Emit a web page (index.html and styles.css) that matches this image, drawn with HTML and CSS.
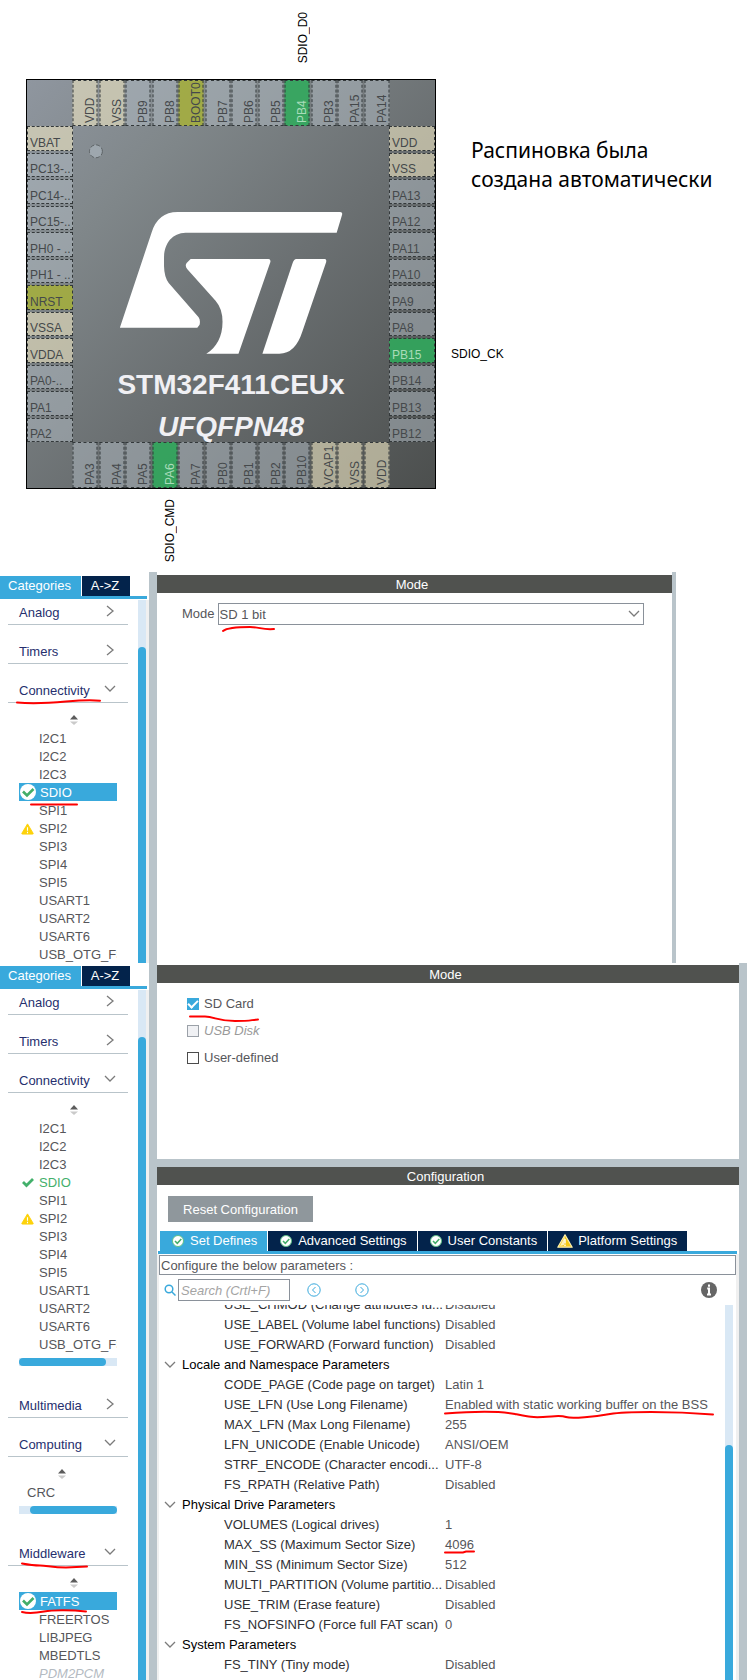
FILE: index.html
```html
<!DOCTYPE html>
<html lang="ru">
<head>
<meta charset="utf-8">
<title>STM32F411CEUx</title>
<link rel="stylesheet" href="styles.css">
</head>
<body>
<svg class="defs" width="0" height="0" aria-hidden="true">
  <symbol id="right" viewBox="0 0 12 12"><path d="M3 1l6 5-6 5" fill="none" stroke="#7b7b7b" stroke-width="1.3"/></symbol>
  <symbol id="down" viewBox="0 0 12 12"><path d="M1 3l5 5 5-5" fill="none" stroke="#7b7b7b" stroke-width="1.3"/></symbol>
  <symbol id="sort" viewBox="0 0 8 10"><path d="M0 4.5L4 0l4 4.500z" fill="#5c5c5c"/><path d="M0 6.500L4 10l4-3.500z" fill="#cacaca"/></symbol>
  <symbol id="tick" viewBox="0 0 16 16"><path d="M3 8l3.500 3.500L13 5" fill="none" stroke="#43b06b" stroke-width="2.800"/></symbol>
  <symbol id="ticked" viewBox="0 0 16 16"><circle cx="8" cy="8" r="8" fill="#fff"/><path d="M3 7.500l4 4 6.500-6.500" fill="none" stroke="#43ad69" stroke-width="2.600"/></symbol>
  <symbol id="tabok" viewBox="0 0 12 12"><circle cx="6" cy="6" r="5.500" fill="#fff" stroke="#5fc088"/><path d="M3 6l2.300 2.300L9.300 4" fill="none" stroke="#43ad69" stroke-width="1.500"/></symbol>
  <symbol id="warn" viewBox="0 0 14 12"><path d="M7 .5L1 10.500Q.5 11.500 1.500 11.500h11q1 0 .5-1z" fill="#fdd20a" stroke="#fdd20a"/><path d="M7 4v4M7 9v1.500" stroke="#fff" stroke-width="1.200"/></symbol>
  <symbol id="warntab" viewBox="0 0 16 14"><path d="M8 .7L.8 13.200h14.400z" fill="#f6c915" stroke="#fbeeb0" stroke-width="1.200" stroke-linejoin="round"/><path d="M8 2L3 12l4-1z" fill="#fdf0b4"/><path d="M8 5v4.500M8 10.500v1.500" stroke="#fff" stroke-width="1.400"/></symbol>
</svg>
<div class="page">

  <section class="pinout">
    <div class="toplabels"><span class="up net c9">SDIO_D0</span></div>
    <div class="chip">
      <div class="pins top">
        <span class="pin pw">VDD</span><span class="pin pw">VSS</span><span class="pin">PB9</span><span class="pin">PB8</span><span class="pin sys">BOOT0</span><span class="pin">PB7</span><span class="pin">PB6</span><span class="pin">PB5</span><span class="pin on">PB4</span><span class="pin">PB3</span><span class="pin">PA15</span><span class="pin">PA14</span>
      </div>
      <div class="pins left">
        <span class="pin pw">VBAT</span><span class="pin">PC13-..</span><span class="pin">PC14-..</span><span class="pin">PC15-..</span><span class="pin">PH0 - ..</span><span class="pin">PH1 - ..</span><span class="pin sys">NRST</span><span class="pin pw">VSSA</span><span class="pin pw">VDDA</span><span class="pin">PA0-..</span><span class="pin">PA1</span><span class="pin">PA2</span>
      </div>
      <div class="die">
        <svg class="logo" viewBox="72 126 317 240" aria-hidden="true">
          <circle cx="95" cy="151" r="6.500" fill="#9ea7ae" stroke="#5c6265" stroke-dasharray="4 2"/>
          <g fill="#fff">
            <path d="M119 328L150.700 233Q157 212 177 212H340Q342.500 212 342 214.500L336.500 232.700H185C171 233 163.300 244 163.300 258V266Q163.500 277 168 283L198 317.500Q200 320 199 325L196.700 328Z"/>
            <path d="M190 259H268Q270.500 259 270 262L238 354H205.700C216 348 222 337 222 322Q222 309 215 301L186.500 269Q184 266 186 263Z"/>
            <path d="M296 259H324.500Q326.500 259 326 262L302 332Q295 354 279 354H262L292 264Q293.500 259 296 259Z"/>
          </g>
        </svg>
        <strong class="part">STM32F411CEUx</strong>
        <strong class="package">UFQFPN48</strong>
      </div>
      <div class="pins right">
        <span class="pin pw">VDD</span><span class="pin pw">VSS</span><span class="pin">PA13</span><span class="pin">PA12</span><span class="pin">PA11</span><span class="pin">PA10</span><span class="pin">PA9</span><span class="pin">PA8</span><span class="pin on">PB15</span><span class="pin">PB14</span><span class="pin">PB13</span><span class="pin">PB12</span>
      </div>
      <div class="pins bottom">
        <span class="pin">PA3</span><span class="pin">PA4</span><span class="pin">PA5</span><span class="pin on">PA6</span><span class="pin">PA7</span><span class="pin">PB0</span><span class="pin">PB1</span><span class="pin">PB2</span><span class="pin">PB10</span><span class="pin pw">VCAP1</span><span class="pin pw">VSS</span><span class="pin pw">VDD</span>
      </div>
    </div>
    <div class="sidelabels">
      <p class="note">Распиновка была<br>создана автоматически</p>
      <span class="net ck">SDIO_CK</span>
    </div>
    <div class="bottomlabels"><span class="up net c4">SDIO_CMD</span></div>
  </section>

  <section class="panel first">
    <aside class="side">
      <div class="tabs"><button class="tab active">Categories</button><button class="tab">A-&gt;Z</button></div>
      <div class="scroller">
        <div class="cats">
          <button class="cat">Analog<svg><use href="#right"/></svg></button>
          <button class="cat">Timers<svg><use href="#right"/></svg></button>
          <button class="cat">Connectivity<svg><use href="#down"/></svg></button>
          <div class="sort"><svg><use href="#sort"/></svg></div>
          <ul class="list">
            <li>I2C1</li><li>I2C2</li><li>I2C3</li>
            <li class="sel"><svg><use href="#ticked"/></svg>SDIO</li>
            <li>SPI1</li><li><svg class="w"><use href="#warn"/></svg>SPI2</li><li>SPI3</li><li>SPI4</li><li>SPI5</li>
            <li>USART1</li><li>USART2</li><li>USART6</li><li>USB_OTG_FS</li>
          </ul>
        </div>
        <div class="vbar"><div class="vthumb"></div></div>
      </div>
    </aside>
    <main class="main">
      <h2 class="bar">Mode</h2>
      <div class="moderow">
        <label for="mode">Mode</label>
        <div class="combo"><select id="mode"><option>SD 1 bit</option></select><svg><use href="#down"/></svg></div>
      </div>
    </main>
    <svg class="marks" aria-hidden="true">
      <path d="M17 130.500C35 132 55 130.500 66 129.500S90 127.500 100 128.700"/>
      <path d="M223 59C228 55 240 55 250 55S262 58 274 57"/>
      <path d="M31 232.500H77"/>
    </svg>
  </section>

  <section class="panel second">
    <aside class="side">
      <div class="tabs"><button class="tab active">Categories</button><button class="tab">A-&gt;Z</button></div>
      <div class="scroller">
        <div class="cats">
          <button class="cat">Analog<svg><use href="#right"/></svg></button>
          <button class="cat">Timers<svg><use href="#right"/></svg></button>
          <button class="cat">Connectivity<svg><use href="#down"/></svg></button>
          <div class="sort"><svg><use href="#sort"/></svg></div>
          <ul class="list">
            <li>I2C1</li><li>I2C2</li><li>I2C3</li>
            <li class="ok"><svg><use href="#tick"/></svg>SDIO</li>
            <li>SPI1</li><li><svg class="w"><use href="#warn"/></svg>SPI2</li><li>SPI3</li><li>SPI4</li><li>SPI5</li>
            <li>USART1</li><li>USART2</li><li>USART6</li><li>USB_OTG_FS</li>
          </ul>
          <div class="hbar"><div class="hthumb"></div></div>
          <button class="cat">Multimedia<svg><use href="#right"/></svg></button>
          <button class="cat">Computing<svg><use href="#down"/></svg></button>
          <div class="sort near"><svg><use href="#sort"/></svg></div>
          <ul class="list near"><li>CRC</li></ul>
          <div class="hbar end"><div class="hthumb"></div></div>
          <button class="cat">Middleware<svg><use href="#down"/></svg></button>
          <div class="sort"><svg><use href="#sort"/></svg></div>
          <ul class="list">
            <li class="sel"><svg><use href="#ticked"/></svg>FATFS</li>
            <li>FREERTOS</li><li>LIBJPEG</li><li>MBEDTLS</li><li class="off">PDM2PCM</li>
          </ul>
        </div>
        <div class="vbar"><div class="vthumb"></div></div>
      </div>
    </aside>
    <main class="main">
      <h2 class="bar">Mode</h2>
      <div class="checks">
        <label><input type="checkbox" checked>SD Card</label>
        <label class="off"><input type="checkbox" disabled>USB Disk</label>
        <label><input type="checkbox">User-defined</label>
      </div>
      <h2 class="bar">Configuration</h2>
      <div class="config">
        <button class="reset">Reset Configuration</button>
        <div class="tabs ctabs">
          <button class="tab active"><svg><use href="#tabok"/></svg>Set Defines</button>
          <button class="tab"><svg><use href="#tabok"/></svg>Advanced Settings</button>
          <button class="tab"><svg><use href="#tabok"/></svg>User Constants</button>
          <button class="tab plat"><svg><use href="#warntab"/></svg>Platform Settings</button>
        </div>
        <div class="params">
          <p class="desc">Configure the below parameters :</p>
          <div class="tools">
            <label for="search" aria-label="Search"><svg class="lens" viewBox="0 0 12 12"><circle cx="5" cy="5" r="3.800"/><path d="M8 8l3.500 3.500"/></svg></label>
            <input id="search" type="text" placeholder="Search (Crtl+F)">
            <button class="nav" aria-label="Previous"><svg viewBox="0 0 14 14"><circle cx="7" cy="7" r="6.200"/><path d="M8.500 4L5.500 7l3 3"/></svg></button>
            <button class="nav" aria-label="Next"><svg viewBox="0 0 14 14"><circle cx="7" cy="7" r="6.200"/><path d="M5.500 4l3 3-3 3"/></svg></button>
            <button class="info" aria-label="Info"><svg viewBox="0 0 16 16"><circle cx="8" cy="8" r="8"/><path d="M8 2.500v2.300M6.200 6.500H8v6M6 12.500h4"/></svg></button>
          </div>
          <div class="scroller">
            <table class="grid">
              <tr><td>USE_CHMOD (Change attributes fu...</td><td>Disabled</td></tr>
              <tr><td>USE_LABEL (Volume label functions)</td><td>Disabled</td></tr>
              <tr><td>USE_FORWARD (Forward function)</td><td>Disabled</td></tr>
              <tr><th colspan="2"><svg><use href="#down"/></svg>Locale and Namespace Parameters</th></tr>
              <tr><td>CODE_PAGE (Code page on target)</td><td>Latin 1</td></tr>
              <tr><td>USE_LFN (Use Long Filename)</td><td>Enabled with static working buffer on the BSS</td></tr>
              <tr><td>MAX_LFN (Max Long Filename)</td><td>255</td></tr>
              <tr><td>LFN_UNICODE (Enable Unicode)</td><td>ANSI/OEM</td></tr>
              <tr><td>STRF_ENCODE (Character encodi...</td><td>UTF-8</td></tr>
              <tr><td>FS_RPATH (Relative Path)</td><td>Disabled</td></tr>
              <tr><th colspan="2"><svg><use href="#down"/></svg>Physical Drive Parameters</th></tr>
              <tr><td>VOLUMES (Logical drives)</td><td>1</td></tr>
              <tr><td>MAX_SS (Maximum Sector Size)</td><td>4096</td></tr>
              <tr><td>MIN_SS (Minimum Sector Size)</td><td>512</td></tr>
              <tr><td>MULTI_PARTITION (Volume partitio...</td><td>Disabled</td></tr>
              <tr><td>USE_TRIM (Erase feature)</td><td>Disabled</td></tr>
              <tr><td>FS_NOFSINFO (Force full FAT scan)</td><td>0</td></tr>
              <tr><th colspan="2"><svg><use href="#down"/></svg>System Parameters</th></tr>
              <tr><td>FS_TINY (Tiny mode)</td><td>Disabled</td></tr>
              <tr><td>FS_EXFAT (Support for exFAT fi...</td><td>Disabled</td></tr>
            </table>
            <div class="vbar"><div class="vthumb"></div></div>
          </div>
        </div>
      </div>
    </main>
    <svg class="marks" aria-hidden="true">
      <path d="M190 53.500H205C215 54 218 58 235 58S250 57 258 56.500"/>
      <path d="M22 600.500C30 602 33 602.500 40 602.500S52 604.500 66 604.500L87 603.500"/>
      <path d="M22 649C30 651 36 650 44 648.500S70 646.500 86 648.500"/>
      <path d="M445 450.500C470 448.500 500 448 515 451S532 454.500 543 454S560 452 566 454S595 453.500 610 451S670 448 713 451.500"/>
      <path d="M445 589.500H463L466 588.500H474"/>
    </svg>
  </section>
</div>
</body>
</html>
```
FILE: styles.css
```css
* { box-sizing: border-box; }
body { margin: 0; background: #fff; color: #56565a; font: 13px/18px "Liberation Sans", Arial, sans-serif; }
button { border: 0; padding: 0; margin: 0; background: none; font: inherit; color: inherit; }
ul, p, h2 { margin: 0; padding: 0; list-style: none; font-weight: normal; }
svg { display: block; flex: none; }
.defs { position: absolute; }
.page { display: flex; flex-direction: column; height: 100vh; overflow: hidden; }

/* Chip pinout */
.pinout { display: grid; grid-template-columns: 410px 1fr; grid-template-rows: 79px 410px 83px; padding-left: 26px; font-size: 12px; line-height: 14px; }
.toplabels, .bottomlabels { display: grid; grid-template-columns: repeat(12, 1fr); column-gap: 2px; padding: 0 47px; }
.toplabels { grid-column: 1; align-items: end; padding-bottom: 16px; }
.bottomlabels { grid-column: 1; grid-row: 3; align-items: start; padding-top: 10px; }
.up { writing-mode: vertical-rl; transform: rotate(180deg); justify-self: end; margin-left: 2px; }
.net { color: #000; }
.c9 { grid-column: 9; }
.c4 { grid-column: 4; }
.chip { grid-column: 1; grid-row: 2; display: grid; grid-template-columns: 46px minmax(0, 1fr) 46px; grid-template-rows: 46px minmax(0, 1fr) 46px; border: 1px solid #000; background: linear-gradient(135deg, #8f969f, #80878a 25%, #6b7072 55%, #4c4f4e); }
.pins { display: grid; gap: 2px; }
.top, .bottom { grid-column: 2; grid-template-columns: repeat(12, minmax(0, 1fr)); }
.left, .right { grid-row: 2; grid-template-rows: repeat(12, minmax(0, 1fr)); }
.top { grid-row: 1; }
.bottom { grid-row: 3; }
.left { grid-column: 1; }
.right { grid-column: 3; }
.pin { display: flex; align-items: flex-end; padding-left: 2px; border: 1px dashed #33383a; background: rgba(179, 189, 198, .5); color: #45494b; white-space: nowrap; }
.top .pin, .bottom .pin { writing-mode: vertical-rl; transform: rotate(180deg); padding: 2px 0 0; }
.pin.pw { background: rgba(238, 230, 195, .6); }
.pin.sys { background: rgba(169, 179, 54, .8); }
.pin.on { background: rgba(46, 172, 92, .85); color: #a9dcb9; }
.die { grid-column: 2; grid-row: 2; display: flex; flex-direction: column; align-items: center; color: #f0f0f4; font-size: 28px; line-height: 30px; }
.logo { width: 100%; height: 240px; margin-bottom: 4px; }
.part, .package { white-space: nowrap; }
.package { margin-top: 12px; font-style: italic; }
.sidelabels { grid-column: 2; grid-row: 2; display: grid; grid-template-rows: repeat(12, minmax(0, 1fr)); row-gap: 2px; padding: 47px 0 47px 15px; }
.note { grid-row: 1 / 4; align-self: center; padding-left: 20px; color: #000; font: 21px/29px "Noto Sans", "Open Sans", sans-serif; white-space: nowrap; }
.ck { grid-row: 9; align-self: end; padding-bottom: 2px; }

/* Shared panels */
.panel { position: relative; display: flex; }
.side { width: 157px; flex: none; border-right: 8px solid #b9c4ca; display: flex; flex-direction: column; }
.tabs { display: flex; gap: 1px; margin-right: 2px; border-bottom: 3px solid #39a9dc; color: #fff; }
.tab { height: 20px; background: #03234b; white-space: nowrap; }
.tab.active { background: #39a9dc; }
.side .tabs { margin-bottom: 1px; }
.side .tab { width: 48px; padding-right: 2px; }
.side .tab.active { width: 81px; }
.first .side { padding-top: 4px; }
.second .side { padding-top: 3px; }
.scroller { flex: 1; min-height: 0; display: flex; justify-content: space-between; overflow: hidden; }
.side .scroller { border-right: 3px solid #f0f0f0; }
.vbar { width: 8px; flex: none; background: #d9e8f5; padding-top: 47px; }
.vthumb { height: 100%; background: #39a9dc; border-radius: 4px 4px 0 0; }
.cats { width: 120px; margin-left: 8px; }
.cat { display: flex; align-items: center; justify-content: space-between; width: 100%; height: 25px; padding: 2px 12px 0 11px; margin-top: 14px; border-bottom: 1px solid #b9c4ca; color: #262f6e; text-align: left; line-height: 22px; }
.cat:first-child { margin-top: 0; }
.cat svg { width: 12px; height: 12px; margin-bottom: 5px; }
.sort { height: 26px; padding: 12px 0 0 62px; }
.sort.near { padding-left: 50px; }
.sort svg { width: 8px; height: 10px; }
.list { margin: 0 11px; overflow: hidden; }
.list li { position: relative; height: 18px; padding-left: 20px; line-height: 20px; white-space: nowrap; }
.list li svg { position: absolute; left: 1px; top: 1px; width: 16px; height: 16px; }
.list li svg.w { left: 2px; top: 4px; width: 13px; height: 12px; }
.list.near li { padding-left: 8px; }
.list li.sel { padding-left: 21px; background: #39a9dc; color: #fff; }
.list .ok { color: #43b06b; }
.off { color: #b4bbc2; font-style: italic; }
.hbar { height: 8px; margin: 5px 11px 27px; background: #d9e8f5; }
.hthumb { width: 87px; height: 8px; border-radius: 4px; background: #39a9dc; }
.hbar.end .hthumb { margin-left: auto; }
.main { flex: 1; min-width: 0; display: flex; flex-direction: column; }
.bar { height: 18px; flex: none; padding-right: 5px; background: #50524f; color: #fff; font-size: 13px; line-height: 20px; text-align: center; }
.marks { position: absolute; left: 0; top: 0; width: 100%; height: 100%; pointer-events: none; fill: none; stroke: #fe0000; stroke-width: 2; stroke-linecap: round; }

/* First panel */
.first .main { padding-top: 3px; margin-right: 71px; border-right: 4px solid #b9c4ca; }
.moderow { display: flex; align-items: center; gap: 3px; padding: 10px 28px 0 25px; line-height: 20px; }
.combo { position: relative; flex: 1; }
.combo select { display: block; width: 100%; height: 22px; padding: 1px 1px 0; appearance: none; border: 1px solid #8a919a; border-radius: 0; background: #fff; color: inherit; font: inherit; }
.combo svg { position: absolute; right: 4px; top: 5px; width: 12px; height: 12px; }

/* Second panel */
.second { flex: 1; min-height: 0; }
.second .main { padding-top: 2px; border-right: 8px solid #b9c4ca; }
.checks { display: flex; flex-direction: column; gap: 9px; height: 184px; flex: none; padding: 12px 0 0 30px; border-bottom: 8px solid #b9c4ca; }
.checks label { display: flex; align-items: center; gap: 5px; height: 18px; line-height: 20px; }
.checks .off { color: #9a9a9a; }
.checks input { appearance: none; width: 12px; height: 12px; margin: 0; border: 1px solid #4c4c4c; background: #fff; }
.checks input:disabled { border-color: #9ba1a8; background: #f0f1f4; }
.checks input:checked { border: 0; background: #39a9dc; display: grid; place-items: center; }
.checks input:checked::before { content: ""; width: 8px; height: 4px; border: solid #fff; border-width: 0 0 2px 2px; transform: rotate(-45deg); margin-bottom: 2px; }
.config { flex: 1; min-height: 0; display: flex; flex-direction: column; padding-top: 11px; }
.reset { align-self: flex-start; width: 145px; height: 26px; margin-left: 11px; padding-top: 1px; flex: none; background: #8f979c; color: #fff; }
.ctabs { margin: 9px 2px 0 1px; padding-left: 2px; flex: none; }
.ctabs .tab { display: flex; align-items: center; gap: 6px; padding: 0 10px 1px 12px; }
.ctabs .tab svg { width: 12px; height: 12px; }
.ctabs .plat { gap: 5px; padding-left: 9px; }
.ctabs .plat svg { width: 16px; height: 14px; }
.params { flex: 1; min-height: 0; display: flex; flex-direction: column; border: solid #f0f0f0; border-width: 0 3px 0 2px; padding-top: 1px; }
.desc { height: 20px; flex: none; border: 1px solid #8a919a; padding-left: 1px; line-height: 20px; }
.tools { display: flex; align-items: center; height: 30px; flex: none; padding: 0 19px 0 5px; }
.tools svg { fill: none; stroke: #39a9dc; }
.lens { width: 12px; height: 12px; stroke-width: 1.5px; margin-right: 2px; }
.tools input { width: 112px; height: 22px; margin-right: 17px; padding: 0 2px; border: 1px solid #8a919a; border-radius: 0; font: inherit; color: inherit; }
.tools input::placeholder { color: #a4a4a4; font-style: italic; opacity: 1; }
.nav svg { width: 14px; height: 14px; }
.nav + .nav { margin-left: 34px; }
.info { margin-left: auto; }
.info svg { width: 16px; height: 16px; stroke: #fff; stroke-width: 2px; }
.info circle { fill: #666; stroke: none; }
.params .vbar { margin-right: 3px; padding-top: 140px; }
.grid { flex: 1; border-collapse: collapse; margin-top: -10px; align-self: flex-start; table-layout: fixed; }
.grid td, .grid th { height: 20px; padding: 0; font-weight: normal; text-align: left; line-height: 20px; white-space: nowrap; }
.grid td:first-child { width: 286px; padding-left: 65px; color: #303034; }
.grid th { color: #000; }
.grid th svg { display: inline-block; width: 12px; height: 12px; margin: 0 6px 0 5px; vertical-align: -2px; }
```
